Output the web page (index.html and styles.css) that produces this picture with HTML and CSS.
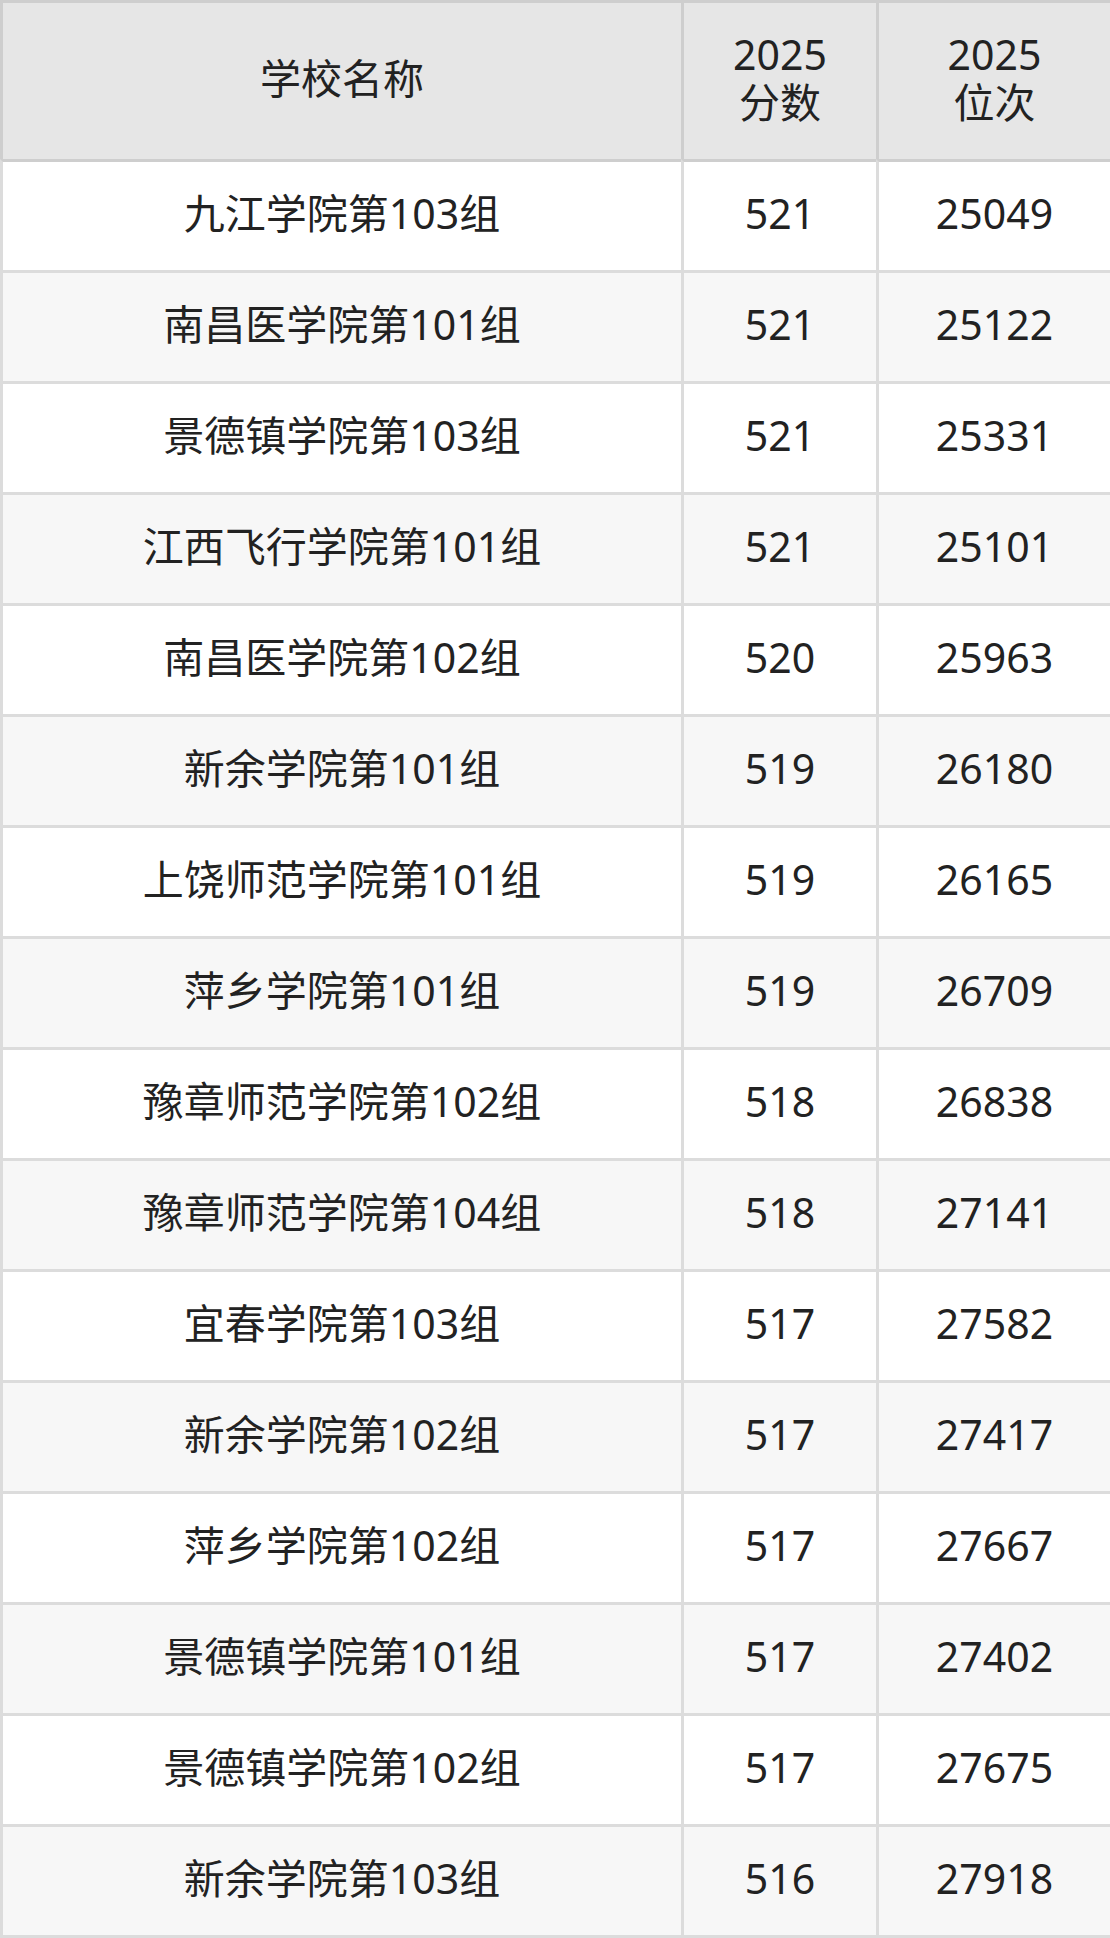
FILE: index.html
```html
<!DOCTYPE html>
<html lang="zh-CN">
<head>
<meta charset="utf-8">
<title>分数位次</title>
<link rel="stylesheet" href="styles.css">
</head>
<body>
<table class="score-table">
  <colgroup>
    <col class="col-name">
    <col class="col-score">
    <col class="col-rank">
  </colgroup>
  <thead>
    <tr>
      <th>学校名称</th>
      <th>2025<br>分数</th>
      <th>2025<br>位次</th>
    </tr>
  </thead>
  <tbody>
    <tr><td>九江学院第103组</td><td>521</td><td>25049</td></tr>
    <tr><td>南昌医学院第101组</td><td>521</td><td>25122</td></tr>
    <tr><td>景德镇学院第103组</td><td>521</td><td>25331</td></tr>
    <tr><td>江西飞行学院第101组</td><td>521</td><td>25101</td></tr>
    <tr><td>南昌医学院第102组</td><td>520</td><td>25963</td></tr>
    <tr><td>新余学院第101组</td><td>519</td><td>26180</td></tr>
    <tr><td>上饶师范学院第101组</td><td>519</td><td>26165</td></tr>
    <tr><td>萍乡学院第101组</td><td>519</td><td>26709</td></tr>
    <tr><td>豫章师范学院第102组</td><td>518</td><td>26838</td></tr>
    <tr><td>豫章师范学院第104组</td><td>518</td><td>27141</td></tr>
    <tr><td>宜春学院第103组</td><td>517</td><td>27582</td></tr>
    <tr><td>新余学院第102组</td><td>517</td><td>27417</td></tr>
    <tr><td>萍乡学院第102组</td><td>517</td><td>27667</td></tr>
    <tr><td>景德镇学院第101组</td><td>517</td><td>27402</td></tr>
    <tr><td>景德镇学院第102组</td><td>517</td><td>27675</td></tr>
    <tr><td>新余学院第103组</td><td>516</td><td>27918</td></tr>
  </tbody>
</table>
</body>
</html>
```

FILE: styles.css
```css
html, body {
  margin: 0;
  padding: 0;
  background: #ffffff;
}

.score-table {
  border-collapse: separate;
  border-spacing: 0;
  table-layout: fixed;
  width: 1110px;
  border-right: 3px solid #dcdcdc;
  border-bottom: 3px solid #dcdcdc;
  font-family: "Noto Sans", "Noto Sans CJK SC", sans-serif;
  font-size: 41px;
  line-height: 48px;
  color: #222222;
}

.col-name { width: 681px; }
.col-score { width: 195px; }
.col-rank { width: 234px; }

.score-table th,
.score-table td {
  padding: 0 0 7px 0;
  text-align: center;
  vertical-align: middle;
  box-sizing: border-box;
}

.score-table th {
  height: 159px;
  background: #e6e6e6;
  font-weight: normal;
  border-top: 3px solid #cecece;
  border-left: 3px solid #cecece;
}

.score-table td {
  height: 111px;
  border-top: 3px solid #dcdcdc;
  border-left: 3px solid #dcdcdc;
}

.score-table tbody tr:first-child td {
  border-top-color: #cecece;
}

.score-table tbody tr:nth-child(even) td {
  background: #f7f7f7;
}
```
